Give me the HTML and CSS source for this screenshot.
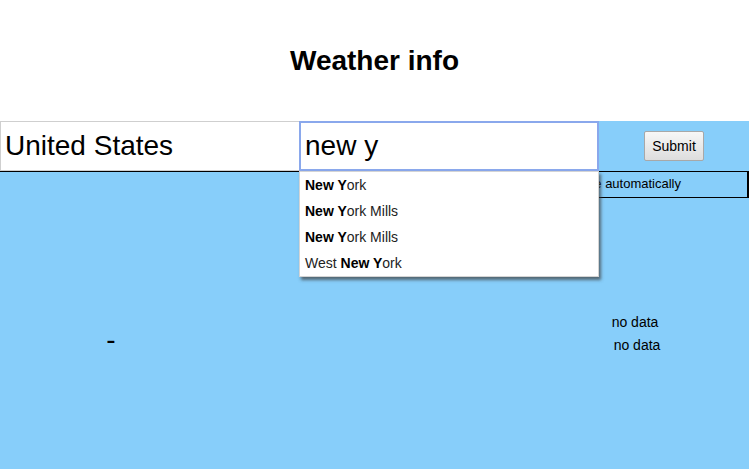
FILE: index.html
```html
<!DOCTYPE html>
<html>
<head>
<meta charset="utf-8">
<title>Weather info</title>
<link rel="stylesheet" href="styles.css">
</head>
<body>
<header class="header">
  <h1 class="title">Weather info</h1>
</header>
<main class="main">
  <form class="search-row">
    <input class="field field-country" type="text" value="United States">
    <div class="city-wrap">
      <input class="field field-city" type="text" value="new y">
      <ul class="suggestions">
        <li class="suggestion"><b>New Y</b>ork</li>
        <li class="suggestion"><b>New Y</b>ork Mills</li>
        <li class="suggestion"><b>New Y</b>ork Mills</li>
        <li class="suggestion">West <b>New Y</b>ork</li>
      </ul>
    </div>
    <div class="submit-cell"><button class="submit" type="button">Submit</button></div>
  </form>
  <div class="auto-row">
    <div class="auto-box">Determine location and time zone automatically</div>
  </div>
  <section class="weather">
    <div class="temp">-</div>
    <div class="info">
      <div class="info-line">no data</div>
      <div class="info-line info-line-2">no data</div>
    </div>
  </section>
</main>
</body>
</html>
```
FILE: styles.css
```css
* { box-sizing: border-box; }
html, body { margin: 0; padding: 0; height: 100%; }
body {
  font-family: "Liberation Sans", Arial, sans-serif;
  color: #000;
  background: #fff;
  display: flex;
  flex-direction: column;
}
.header {
  height: 121px;
  display: flex;
  align-items: center;
  justify-content: center;
  flex: none;
}
.title {
  margin: 0;
  font-size: 28px;
  font-weight: bold;
  line-height: 32px;
  padding-top: 1px;
}
.main {
  flex: 1;
  background: #87cefa;
  display: flex;
  flex-direction: column;
}
.search-row {
  margin: 0;
  display: flex;
  height: 51px;
  border-bottom: 1px solid #000;
}
.field {
  height: 50px;
  margin: 0;
  font-family: "Liberation Sans", Arial, sans-serif;
  font-size: 28px;
  color: #000;
  background: #fff;
  outline: none;
}
.field-country {
  width: 299px;
  border: 1px solid #cfcfcf;
  border-right: none;
  padding: 0 3px 0 4px;
}
.city-wrap {
  position: relative;
  width: 300px;
}
.field-city {
  width: 300px;
  border: 2px solid #8aa8ec;
  padding: 0 3px 0 4px;
}
.suggestions {
  position: absolute;
  left: 0;
  top: 50px;
  width: 300px;
  margin: 0;
  padding: 0;
  list-style: none;
  background: #fff;
  border: 1px solid #d4d4d4;
  box-shadow: 2px 3px 3px rgba(60, 60, 60, 0.7);
  z-index: 5;
}
.suggestion {
  height: 26px;
  line-height: 26px;
  padding-left: 5px;
  font-size: 14px;
  color: #222;
}
.suggestion b { color: #000; }
.submit-cell {
  flex: 1;
  display: flex;
  align-items: center;
  justify-content: center;
  padding-bottom: 1px;
}
.submit {
  height: 30px;
  width: 60px;
  padding: 0;
  font-family: "Liberation Sans", Arial, sans-serif;
  font-size: 14px;
  color: #000;
  background: linear-gradient(#f7f7f7, #dddddd);
  border: 1px solid #a8a8a8;
  border-radius: 2px;
}
.auto-row {
  display: flex;
  justify-content: flex-end;
}
.auto-box {
  width: 449px;
  height: 26px;
  border: 1px solid #000;
  border-top: none;
  border-right-width: 2px;
  font-size: 13px;
  line-height: 23px;
  text-align: right;
  padding-right: 66px;
  color: #000;
}
.weather {
  display: flex;
  padding-top: 113px;
}
.temp {
  width: 222px;
  text-align: center;
  font-size: 28px;
  line-height: 32px;
  padding-top: 13px;
}
.info {
  margin-left: 353px;
  width: 120px;
  font-size: 14px;
}
.info-line {
  line-height: 22px;
  text-align: center;
}
.info-line-2 { padding-left: 4px; margin-top: 1px; }
```
